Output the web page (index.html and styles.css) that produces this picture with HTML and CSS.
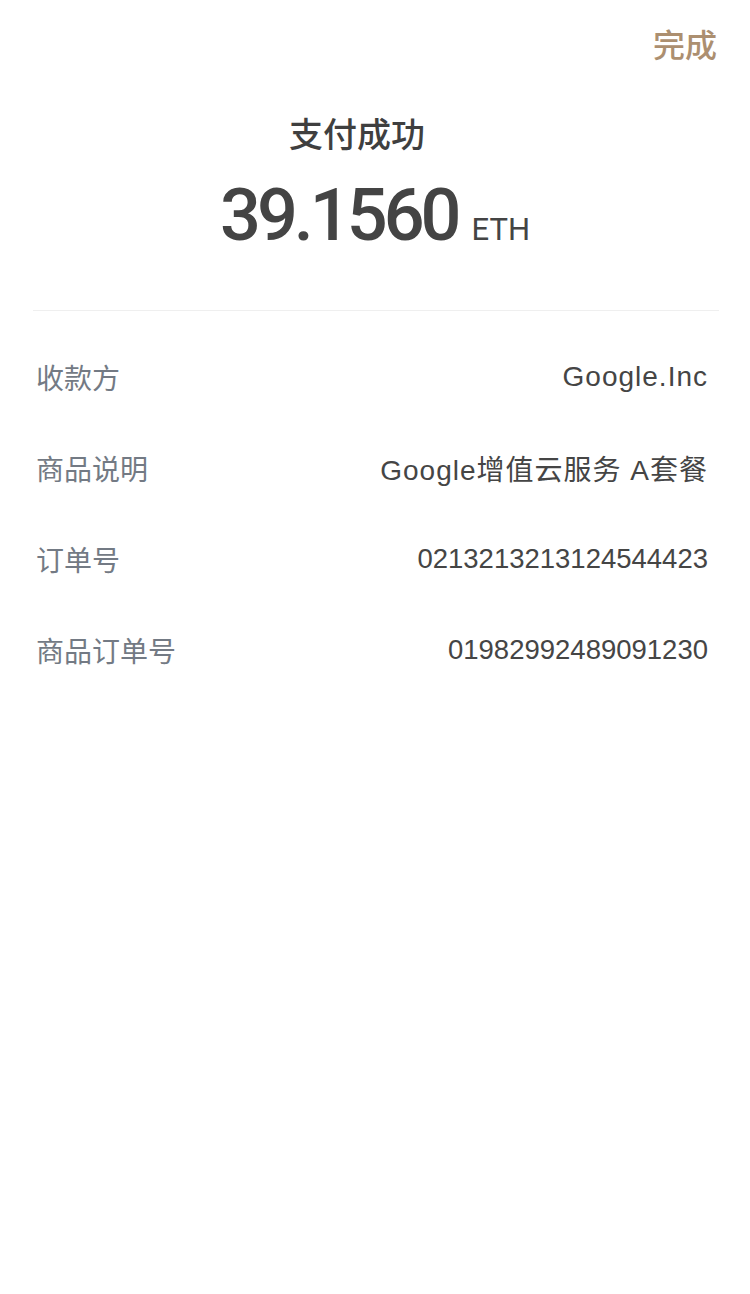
FILE: index.html
```html
<!DOCTYPE html>
<html lang="zh-CN">
<head>
<meta charset="utf-8">
<title>支付成功</title>
<link rel="stylesheet" href="styles.css">
</head>
<body>
<div class="page">
  <div class="topbar"><span class="done">完成</span></div>
  <div class="title">支付成功</div>
  <div class="amount"><span class="num">39.1560</span><span class="unit">ETH</span></div>
  <div class="divider"></div>
  <div class="rows">
    <div class="row"><span class="label">收款方</span><span class="value text">Google.Inc</span></div>
    <div class="row"><span class="label">商品说明</span><span class="value text">Google增值云服务 A套餐</span></div>
    <div class="row"><span class="label">订单号</span><span class="value digits">0213213213124544423</span></div>
    <div class="row"><span class="label">商品订单号</span><span class="value digits">01982992489091230</span></div>
  </div>
</div>
</body>
</html>
```

FILE: styles.css
```css
html, body {
  margin: 0;
  padding: 0;
  background: #ffffff;
}
.page {
  width: 750px;
  font-family: "Liberation Sans", "Noto Sans CJK SC", sans-serif;
}
.topbar {
  height: 86px;
  display: flex;
  justify-content: flex-end;
  align-items: center;
  padding-right: 33px;
}
.done {
  font-family: "Noto Sans CJK SC", sans-serif;
  font-size: 32px;
  font-weight: 500;
  line-height: 40px;
  color: #ac8f70;
}
.title {
  margin-top: 27px;
  padding-right: 36px;
  text-align: center;
  font-family: "Noto Sans CJK SC", sans-serif;
  font-size: 34px;
  font-weight: 500;
  line-height: 40px;
  color: #3f3f3f;
}
.amount {
  margin-top: 23px;
  text-align: center;
  line-height: 80px;
  color: #444444;
  font-family: Roboto, sans-serif;
}
.num {
  font-size: 72px;
  font-weight: 500;
  letter-spacing: -4px;
}
.unit {
  font-size: 31px;
  font-weight: 400;
  margin-left: 14px;
}
.divider {
  margin: 35px 31px 0 33px;
  height: 1px;
  background: #efefef;
}
.rows {
  padding-top: 20px;
}
.row {
  height: 91px;
  display: flex;
  justify-content: space-between;
  align-items: center;
  padding: 0 42px 0 36px;
}
.label {
  font-family: "Noto Sans CJK SC", sans-serif;
  font-size: 28px;
  color: #737a84;
}
.value {
  font-family: "Liberation Sans", "Noto Sans CJK SC", sans-serif;
  font-size: 28px;
  color: #454545;
}
.value.text {
  letter-spacing: 1px;
}
.value.digits {
  font-size: 27.5px;
  letter-spacing: 0;
}
```
